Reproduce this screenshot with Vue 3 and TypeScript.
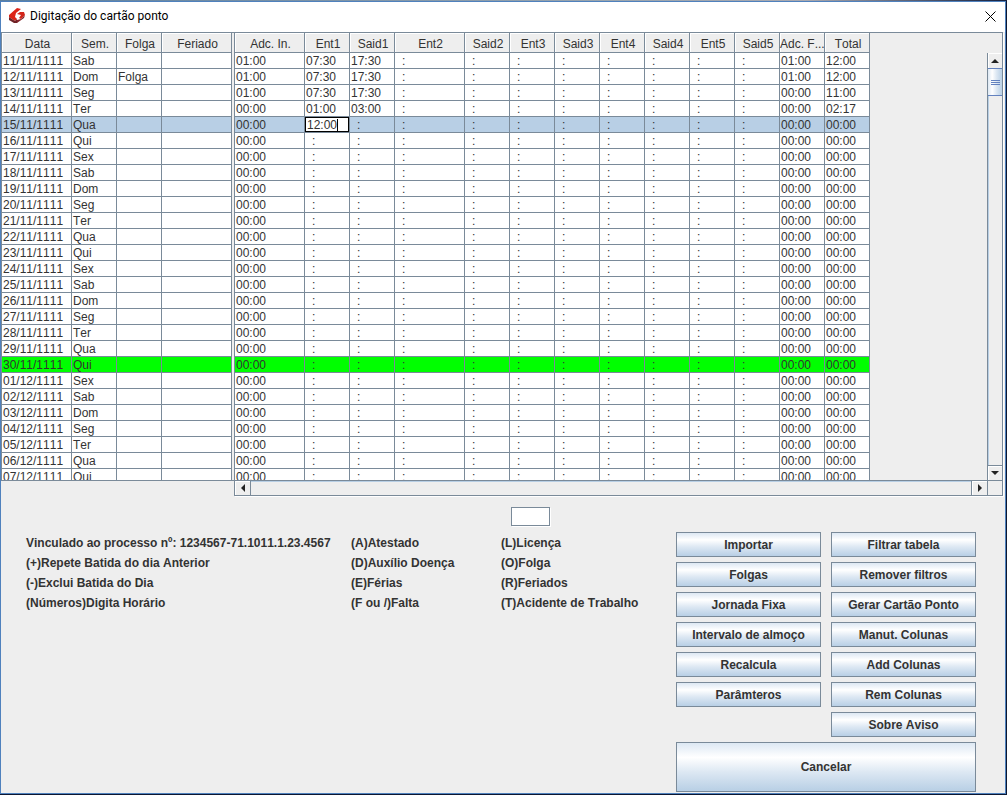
<script setup lang="ts">
import { ref } from 'vue'

interface Column {
  label: string
  size: 'narrow' | 'wide'
}

interface Row {
  date: string
  day: string
  off: string
  start: string
  entries: string[]
  extra: string
  total: string
  state: '' | 'selected' | 'marked'
}

const fixedColumns: Column[] = [
  { label: 'Data', size: 'wide' },
  { label: 'Sem.', size: 'narrow' },
  { label: 'Folga', size: 'narrow' },
  { label: 'Feriado', size: 'wide' },
]

const columns: Column[] = [
  { label: 'Adc. In.', size: 'wide' },
  { label: 'Ent1', size: 'narrow' },
  { label: 'Said1', size: 'narrow' },
  { label: 'Ent2', size: 'wide' },
  { label: 'Said2', size: 'narrow' },
  { label: 'Ent3', size: 'narrow' },
  { label: 'Said3', size: 'narrow' },
  { label: 'Ent4', size: 'narrow' },
  { label: 'Said4', size: 'narrow' },
  { label: 'Ent5', size: 'narrow' },
  { label: 'Said5', size: 'narrow' },
  { label: 'Adc. F...', size: 'narrow' },
  { label: 'Total', size: 'narrow' },
]

const weekDays = ['Sab', 'Dom', 'Seg', 'Ter', 'Qua', 'Qui', 'Sex']

const filled: Record<number, { start: string; entries: string[]; extra: string; total: string }> = {
  0: { start: '01:00', entries: ['07:30', '17:30'], extra: '01:00', total: '12:00' },
  1: { start: '01:00', entries: ['07:30', '17:30'], extra: '01:00', total: '12:00' },
  2: { start: '01:00', entries: ['07:30', '17:30'], extra: '00:00', total: '11:00' },
  3: { start: '00:00', entries: ['01:00', '03:00'], extra: '00:00', total: '02:17' },
}

const selectedIndex = 4
const markedIndex = 19

const rows: Row[] = Array.from({ length: 27 }, (_, i) => {
  const serial = 11 + i
  const day = serial > 30 ? serial - 30 : serial
  const month = serial > 30 ? '12' : '11'
  const data = filled[i]
  const entries = data ? [...data.entries] : []
  while (entries.length < 10) entries.push(':')
  return {
    date: `${String(day).padStart(2, '0')}/${month}/1111`,
    day: weekDays[i % 7],
    off: i === 1 ? 'Folga' : '',
    start: data?.start ?? '00:00',
    entries,
    extra: data?.extra ?? '00:00',
    total: data?.total ?? '00:00',
    state: i === selectedIndex ? 'selected' : i === markedIndex ? 'marked' : '',
  }
})

const editing = ref('12:00')
const command = ref('')

const notes: string[][] = [
  ['Vinculado ao processo nº: 1234567-71.1011.1.23.4567', '(A)Atestado', '(L)Licença'],
  ['(+)Repete Batida do dia Anterior', '(D)Auxílio Doença', '(O)Folga'],
  ['(-)Exclui Batida do Dia', '(E)Férias', '(R)Feriados'],
  ['(Números)Digita Horário', '(F ou /)Falta', '(T)Acidente de Trabalho'],
]

const leftActions = ['Importar', 'Folgas', 'Jornada Fixa', 'Intervalo de almoço', 'Recalcula', 'Parâmteros']
const rightActions = [
  'Filtrar tabela',
  'Remover filtros',
  'Gerar Cartão Ponto',
  'Manut. Colunas',
  'Add Colunas',
  'Rem Colunas',
  'Sobre Aviso',
]
</script>

<template>
  <div class="desktop">
    <div class="window">
      <header class="titlebar">
        <svg class="logo" viewBox="0 0 16 16" aria-hidden="true">
          <path d="M8 0 L12 1 L7 5 L6 9 L8 11 L6 13 L0 9 L0 7 Z" fill="#dc2418" />
          <path d="M0 9 L6 13 L8 11 L8 15 L5 15 L0 12 Z" fill="#6e2226" />
          <path d="M8 6 L11 4 L15 4 L16 7 L12 11 L10 10 L12 7 Z" fill="#d3261b" />
          <path d="M16 7 L15 10 L8 15 L8 12 L12 11 Z" fill="#85242a" />
        </svg>
        <h1 class="title">Digitação do cartão ponto</h1>
        <button class="close" type="button" aria-label="Fechar">
          <svg viewBox="0 0 11 11" aria-hidden="true">
            <path d="M0.5 0.5 L10.5 10.5 M10.5 0.5 L0.5 10.5" stroke="#000" stroke-width="1" />
          </svg>
        </button>
      </header>

      <main class="pane">
        <div class="fixed-side">
          <div class="view">
            <table>
              <colgroup>
                <col v-for="c in fixedColumns" :key="c.label" :class="c.size" />
              </colgroup>
              <thead>
                <tr>
                  <th v-for="c in fixedColumns" :key="c.label" scope="col">{{ c.label }}</th>
                </tr>
              </thead>
              <tbody>
                <tr v-for="r in rows" :key="r.date" :class="r.state">
                  <td>{{ r.date }}</td>
                  <td>{{ r.day }}</td>
                  <td>{{ r.off }}</td>
                  <td></td>
                </tr>
              </tbody>
            </table>
          </div>
        </div>

        <div class="scroll-side">
          <div class="view">
            <table>
              <colgroup>
                <col v-for="c in columns" :key="c.label" :class="c.size" />
              </colgroup>
              <thead>
                <tr>
                  <th v-for="c in columns" :key="c.label" scope="col" :class="{ tight: c.label.length > 7 && c.size === 'narrow' }">
                    {{ c.label }}
                  </th>
                </tr>
              </thead>
              <tbody>
                <tr v-for="(r, i) in rows" :key="r.date" :class="r.state">
                  <td>{{ r.start }}</td>
                  <td
                    v-for="(e, j) in r.entries"
                    :key="j"
                    :class="{ blank: e === ':', editor: i === selectedIndex && j === 0 }"
                  >
                    <template v-if="i === selectedIndex && j === 0">
                      <input v-model="editing" class="cell-input" type="text" aria-label="Ent1" />
                      <span class="caret"></span>
                    </template>
                    <template v-else>{{ e }}</template>
                  </td>
                  <td>{{ r.extra }}</td>
                  <td>{{ r.total }}</td>
                </tr>
              </tbody>
            </table>
          </div>

          <div class="vbar">
            <button class="arrow" type="button" aria-label="Rolar para cima">
              <svg viewBox="0 0 8 4" width="8" height="4"><path d="M4 0 L8 4 L0 4 Z" fill="#222" /></svg>
            </button>
            <div class="thumb"><i></i><i></i><i></i></div>
            <div class="track"></div>
            <button class="arrow down" type="button" aria-label="Rolar para baixo">
              <svg viewBox="0 0 8 4" width="8" height="4"><path d="M0 0 L8 0 L4 4 Z" fill="#222" /></svg>
            </button>
          </div>

          <div class="hbar">
            <button class="arrow" type="button" aria-label="Rolar para a esquerda">
              <svg viewBox="0 0 4 8" width="4" height="8"><path d="M4 0 L4 8 L0 4 Z" fill="#222" /></svg>
            </button>
            <div class="track"></div>
            <button class="arrow right" type="button" aria-label="Rolar para a direita">
              <svg viewBox="0 0 4 8" width="4" height="8"><path d="M0 0 L4 4 L0 8 Z" fill="#222" /></svg>
            </button>
          </div>
          <div class="corner"></div>
        </div>
      </main>

      <footer class="bottom">
        <div class="help">
          <input v-model="command" class="command" type="text" aria-label="Comando" />
          <div class="notes">
            <template v-for="(line, i) in notes" :key="i">
              <span v-for="n in line" :key="n">{{ n }}</span>
            </template>
          </div>
        </div>
        <div class="actions">
          <div class="stack">
            <button v-for="a in leftActions" :key="a" class="btn" type="button">{{ a }}</button>
          </div>
          <div class="stack">
            <button v-for="a in rightActions" :key="a" class="btn" type="button">{{ a }}</button>
          </div>
          <button class="btn cancel" type="button">Cancelar</button>
        </div>
      </footer>
    </div>
  </div>
</template>

<style>
body {
  margin: 0;
  background: #0b1733;
}
</style>

<style scoped>
* {
  box-sizing: border-box;
}

.desktop {
  height: 100vh;
  min-height: 560px;
  padding: 1px 1px 1px 0;
  display: flex;
  background: linear-gradient(90deg, #5b7f9f, #9aa5ae 60%, #a9a9b0 80%, #14203f) top / 100% 1px no-repeat, #0b1733;
  font-family: "Liberation Sans", Arial, sans-serif;
  font-size: 12px;
  font-kerning: none;
  color: #333;
}

.window {
  flex: 1;
  min-width: 0;
  display: flex;
  flex-direction: column;
  border: 1px solid #4f81bd;
  background: #eee;
}

button,
input {
  margin: 0;
  border-radius: 0;
  font: inherit;
  color: inherit;
}

/* Title bar */
.titlebar {
  height: 30px;
  flex: none;
  display: flex;
  align-items: center;
  padding: 0 9px 2px 8px;
  background: #fff;
}

.logo {
  width: 16px;
  height: 16px;
}

.title {
  flex: 1;
  margin: 0;
  padding-left: 5px;
  font: 12px/16px Roboto, "Open Sans", sans-serif;
  color: #000;
}

.close {
  padding: 0;
  border: 0;
  background: none;
  display: flex;
}

.close svg {
  width: 11px;
  height: 11px;
}

/* Grid area */
.pane {
  flex: 1;
  min-height: 0;
  display: flex;
  gap: 2px;
  margin-right: 2px;
}

.fixed-side {
  flex: none;
  padding-bottom: 15px;
  display: flex;
  margin-right: -2px;
}

.fixed-side .view {
  border: solid #7a8a99;
  border-width: 1px 0 1px 1px;
  padding-right: 2px;
}

.view {
  overflow: hidden;
  min-width: 0;
  min-height: 0;
}

.scroll-side {
  flex: 1;
  min-width: 0;
  display: grid;
  grid-template-columns: minmax(0, 1fr) 15px;
  grid-template-rows: 20px minmax(0, 1fr) 15px;
  border: 1px solid #7a8a99;
  box-shadow: 1px 1px 0 #fff;
}

.scroll-side .view {
  grid-column: 1;
  grid-row: 1 / 3;
}

table {
  table-layout: fixed;
  width: min-content;
  border-collapse: separate;
  border-spacing: 0;
}

col.wide {
  width: 70px;
}

col.narrow {
  width: 45px;
}

th,
td {
  border: solid #7a8a99;
  border-width: 0 1px 1px 0;
  white-space: nowrap;
  font-weight: normal;
}

th {
  height: 20px;
  padding: 3px 0 0 2px;
  line-height: 16px;
  text-align: center;
  background: #eee;
  box-shadow: inset 1px 1px 0 #fff;
}

th.tight {
  padding-left: 0;
}

td {
  height: 16px;
  padding: 1px 0 0 1px;
  line-height: 14px;
  background: #fff;
}

td.blank {
  padding-left: 7px;
}

.selected td {
  background: #b8cfe5;
}

.marked td {
  background: #0f0;
}

td.editor {
  position: relative;
  padding: 0;
}

.cell-input {
  display: block;
  width: 100%;
  height: 15px;
  padding: 1px 0 0 1px;
  border: 1px solid #000;
  background: #fff;
  line-height: 12px;
  outline: none;
}

.caret {
  position: absolute;
  left: 32px;
  top: 2px;
  width: 1px;
  height: 12px;
  background: #000;
}

/* Scroll bars */
.vbar {
  grid-column: 2;
  grid-row: 2;
  display: flex;
  flex-direction: column;
  border-left: 1px solid #7a8a99;
}

.hbar {
  grid-column: 1;
  grid-row: 3;
  display: flex;
  border-top: 1px solid #7a8a99;
}

.corner {
  grid-column: 2;
  grid-row: 3;
  border: solid #7a8a99;
  border-width: 1px 0 0 1px;
}

.arrow {
  flex: none;
  display: flex;
  align-items: center;
  justify-content: center;
  padding: 0;
  border: 0;
  background: #eee;
  box-shadow: inset 1px 1px 0 #fff;
}

.vbar .arrow {
  height: 15px;
}

.hbar .arrow {
  width: 16px;
  border-right: 1px solid #7a8a99;
}

.vbar .arrow.down {
  border-top: 1px solid #7a8a99;
}

.hbar .arrow.right {
  border-right: 0;
  border-left: 1px solid #7a8a99;
}

.thumb {
  flex: none;
  height: 28px;
  display: flex;
  flex-direction: column;
  align-items: center;
  justify-content: center;
  gap: 1px;
  border: solid #6382bf;
  border-width: 1px 0;
  background: linear-gradient(90deg, #dde8f3, #fff 30%, #dde8f3 60%, #b8cfe5);
}

.thumb i {
  width: 9px;
  height: 1px;
  background: #6382bf;
}

.track {
  flex: 1;
  background: #eee;
}

.vbar .track {
  box-shadow: inset 1px 0 0 #b8cfe5;
}

.hbar .track {
  box-shadow: inset 0 1px 0 #b8cfe5;
}

/* Help text and buttons */
.bottom {
  flex: none;
  display: flex;
  justify-content: space-between;
  padding: 11px 29px 1px 25px;
  font-weight: bold;
}

.help {
  flex: 1;
  min-width: 0;
}

.command {
  display: block;
  width: 39px;
  height: 19px;
  margin: 0 0 7px 485px;
  padding: 0 2px;
  border: 1px solid #7a8a99;
  background: #fff;
  box-shadow: 1px 1px 0 #fff;
  outline: none;
}

.notes {
  display: grid;
  grid-template-columns: 325px 150px auto;
  line-height: 20px;
  white-space: nowrap;
}

.actions {
  flex: none;
  width: 300px;
  margin-top: 25px;
  display: grid;
  grid-template-columns: 1fr 1fr;
  gap: 5px 10px;
}

.stack {
  display: flex;
  flex-direction: column;
  gap: 5px;
}

.btn {
  height: 25px;
  padding: 0;
  border: 1px solid #7a8a99;
  background: linear-gradient(#dde8f3, #fff 30%, #dde8f3 60%, #b8cfe5);
}

.btn.cancel {
  grid-column: 1 / 3;
  height: 50px;
}
</style>
